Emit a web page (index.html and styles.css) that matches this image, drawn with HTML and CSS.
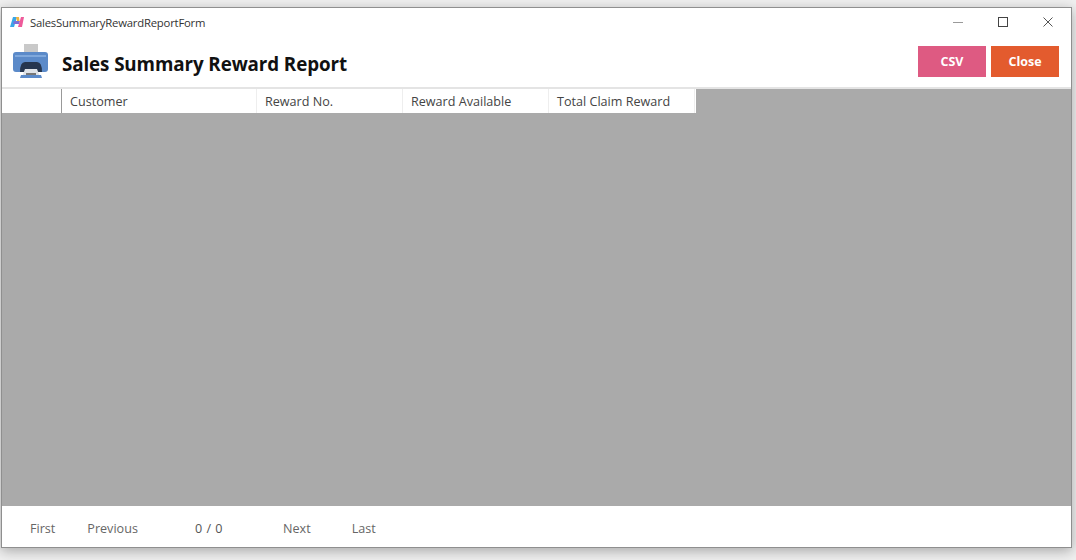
FILE: index.html
```html
<!DOCTYPE html>
<html lang="en">
<head>
    <meta charset="UTF-8">
    <title>SalesSummaryRewardReportForm</title>
    <link rel="stylesheet" href="styles.css">
</head>
<body>
    <div class="window">
        <div class="title-bar">
            <svg class="app-icon" width="14" height="12" viewBox="0 0 14 12">
                <path d="M0 11 L3 1 L7 1 L4 11 Z" fill="#3aa6e8"/>
                <path d="M4 5 L10 5 L9 8 L3 8 Z" fill="#7a6fd8"/>
                <path d="M8 11 L11 1 L14 1 L12 11 Z" fill="#ee5a9a"/>
                <path d="M6 1 L9 1 L9.5 5 L7 5 Z" fill="#f2b33d"/>
            </svg>
            <span class="window-name">SalesSummaryRewardReportForm</span>
            <div class="window-controls">
                <svg width="12" height="12" viewBox="0 0 12 12"><path d="M1 6.5 H11" stroke="#9a9a9a" stroke-width="1"/></svg>
                <svg width="12" height="12" viewBox="0 0 12 12"><rect x="1.5" y="1.5" width="9" height="9" fill="none" stroke="#444" stroke-width="1"/></svg>
                <svg width="12" height="12" viewBox="0 0 12 12"><path d="M1.5 1.5 L10.5 10.5 M10.5 1.5 L1.5 10.5" stroke="#555" stroke-width="1"/></svg>
            </div>
        </div>

        <div class="header">
            <svg class="printer" width="37" height="36" viewBox="0 0 37 36">
                <rect x="12" y="0" width="14" height="10" fill="#c9c9c9"/>
                <path d="M1 11 Q1 8 4 8 H33 Q36 8 36 11 V25 Q36 28 33 28 H4 Q1 28 1 25 Z" fill="#5b8ac9"/>
                <rect x="3" y="11" width="31" height="2" fill="#7fa8dc"/>
                <path d="M8 28 Q8 18 13 18 H25 Q30 18 30 28 Z" fill="#26364f"/>
                <path d="M10 33 L13 25 H25 L28 33 Z" fill="#dfe3e8"/>
                <path d="M9 31 H29 L30 34 H8 Z" fill="#5b8ac9"/>
                <rect x="14" y="29" width="10" height="2" fill="#777"/>
            </svg>
            <h1 class="report-title">Sales Summary Reward Report</h1>
            <div class="actions">
                <button class="btn btn-csv">CSV</button>
                <button class="btn btn-close">Close</button>
            </div>
        </div>

        <div class="grid-area">
            <div class="grid-head">
                <div class="col col-row"></div>
                <div class="col col-customer">Customer</div>
                <div class="col col-number">Reward No.</div>
                <div class="col col-number">Reward Available</div>
                <div class="col col-number">Total Claim Reward</div>
            </div>
        </div>

        <div class="pager">
            <span class="page-link page-first">First</span>
            <span class="page-link page-prev">Previous</span>
            <span class="page-count">0 / 0</span>
            <span class="page-link page-next">Next</span>
            <span class="page-link page-last">Last</span>
        </div>
    </div>
</body>
</html>
```

FILE: styles.css
```css
* {
    box-sizing: border-box;
    margin: 0;
    padding: 0;
    font-family: 'Open Sans', 'Noto Sans', sans-serif;
}

body {
    background-color: #f0f0f0;
    width: 1076px;
    height: 560px;
    overflow: hidden;
    padding: 7px 4px 0 1px;
}

.window {
    display: flex;
    flex-direction: column;
    height: 541px;
    background-color: white;
    border: 1px solid #8f8f8f;
    box-shadow: 0 3px 12px rgba(0, 0, 0, 0.3);
}

.title-bar {
    display: flex;
    align-items: center;
    height: 28px;
    padding-left: 8px;
    flex-shrink: 0;
}

.app-icon {
    margin-right: 6px;
}

.window-name {
    font-size: 11.3px;
    color: #333;
    letter-spacing: -0.2px;
}

.window-controls {
    margin-left: auto;
    display: flex;
    gap: 33px;
    padding-right: 17px;
}

.header {
    display: flex;
    align-items: center;
    height: 51px;
    padding: 0 12px 0 10px;
    flex-shrink: 0;
}

.printer {
    margin-right: 13px;
}

.report-title {
    font-size: 18.8px;
    font-weight: 700;
    color: #111;
    letter-spacing: -0.1px;
    margin-top: 4px;
}

.actions {
    margin-left: auto;
    display: flex;
    gap: 5px;
}

.btn {
    width: 68px;
    height: 31px;
    border: none;
    color: white;
    font-size: 12.5px;
    font-weight: 700;
}

.btn-csv {
    background-color: #de5a82;
}

.btn-close {
    background-color: #e35b2e;
}

.grid-area {
    flex: 1;
    background-color: #aaaaaa;
    border-top: 2px solid #e4e4e4;
}

.grid-head {
    display: flex;
    width: 694px;
    height: 24px;
    background-color: white;
}

.col {
    display: flex;
    align-items: center;
    padding-left: 8px;
    font-size: 12.6px;
    color: #444;
    border-right: 1px solid #eeeeee;
}

.col-row {
    width: 60px;
    border-right-color: #999;
}

.col-customer {
    width: 195px;
}

.col-number {
    width: 146px;
}

.pager {
    display: flex;
    align-items: center;
    height: 41px;
    padding-top: 3px;
    flex-shrink: 0;
    font-size: 12.6px;
    color: #666;
}

.page-first {
    margin-left: 28px;
}

.page-prev {
    margin-left: 32px;
}

.page-count {
    margin-left: 57px;
    color: #555;
    letter-spacing: 0.5px;
}

.page-next {
    margin-left: 60px;
}

.page-last {
    margin-left: 41px;
}
```
